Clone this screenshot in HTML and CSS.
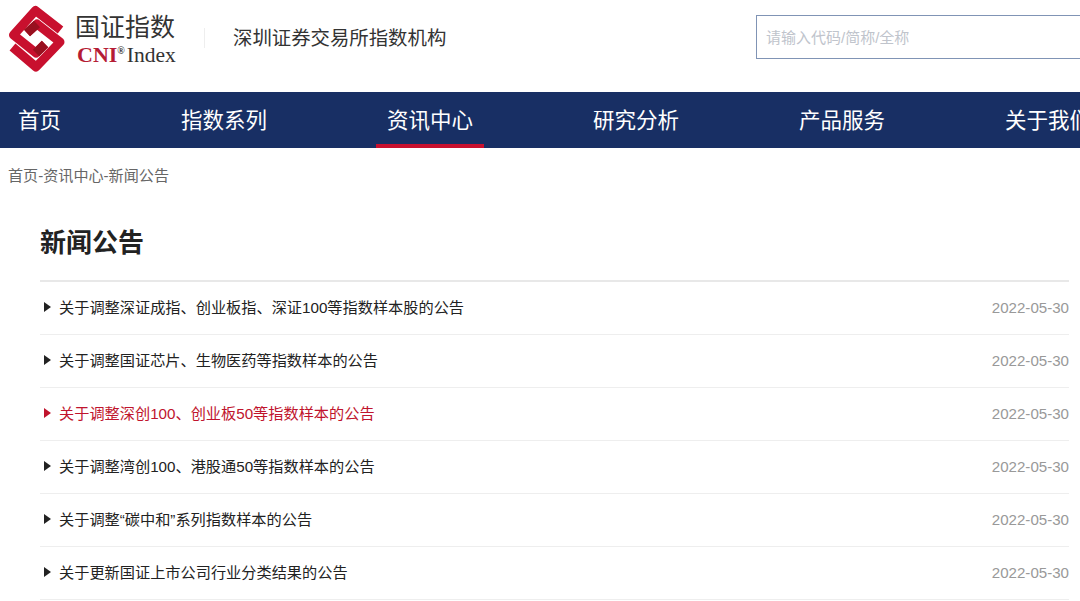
FILE: index.html
```html
<!DOCTYPE html>
<html lang="zh-CN">
<head>
<meta charset="utf-8">
<title>新闻公告</title>
<link rel="stylesheet" href="styles.css">
</head>
<body>
<header class="top">
  <div class="brand">
    <svg class="mark" width="58" height="68" viewBox="8 5 58 68">
      <path class="mark-band" d="M60.500 30 35.500 10.500 13.500 35 36 53 45 44"/>
      <path class="mark-band" d="M12.500 47 36 67 60 42 37 24 27 33"/>
      <path class="mark-shade" d="M37 24 27 33"/>
      <path class="mark-shade" d="M36 53 45 44"/>
    </svg>
    <div class="brand-text">
      <div class="brand-cn">国证指数</div>
      <div class="brand-en"><b>CNI</b><sup>®</sup><span class="brand-index">Index</span></div>
    </div>
  </div>
  <div class="sep"></div>
  <div class="org">深圳证券交易所指数机构</div>
  <div class="search"><span>请输入代码/简称/全称</span></div>
</header>
<nav class="nav">
  <a class="nav-item">首页</a>
  <a class="nav-item">指数系列</a>
  <a class="nav-item active">资讯中心</a>
  <a class="nav-item">研究分析</a>
  <a class="nav-item">产品服务</a>
  <a class="nav-item">关于我们</a>
</nav>
<div class="crumb">首页-资讯中心-新闻公告</div>
<main class="content">
  <h1 class="title">新闻公告</h1>
  <ul class="list">
    <li class="row"><span class="tri"></span><span class="txt">关于调整深证成指、创业板指、深证100等指数样本股的公告</span><span class="date">2022-05-30</span></li>
    <li class="row"><span class="tri"></span><span class="txt">关于调整国证芯片、生物医药等指数样本的公告</span><span class="date">2022-05-30</span></li>
    <li class="row hot"><span class="tri"></span><span class="txt">关于调整深创100、创业板50等指数样本的公告</span><span class="date">2022-05-30</span></li>
    <li class="row"><span class="tri"></span><span class="txt">关于调整湾创100、港股通50等指数样本的公告</span><span class="date">2022-05-30</span></li>
    <li class="row"><span class="tri"></span><span class="txt">关于调整“碳中和”系列指数样本的公告</span><span class="date">2022-05-30</span></li>
    <li class="row"><span class="tri"></span><span class="txt">关于更新国证上市公司行业分类结果的公告</span><span class="date">2022-05-30</span></li>
  </ul>
</main>
</body>
</html>
```
FILE: styles.css
```css
* { box-sizing: border-box; }
html, body { margin: 0; padding: 0; }
body {
  width: 1080px;
  height: 601px;
  overflow: hidden;
  background: #fff;
  color: #222;
  font-family: "Liberation Sans", "Noto Sans CJK SC", sans-serif;
}
.top {
  height: 92px;
  display: flex;
  align-items: flex-start;
}
.brand { display: flex; margin: 5px 0 0 8px; }
.mark-band { fill: none; stroke: #c8102e; stroke-width: 9; stroke-linejoin: round; }
.mark-shade { fill: none; stroke: #98101f; stroke-width: 9; }
.brand-text { margin: 6px 0 0 9px; width: 102px; }
.brand-cn { font-size: 25px; line-height: 33px; color: #333; white-space: nowrap; font-weight: 400; }
.brand-en { font-family: "Liberation Serif", serif; font-size: 22px; line-height: 21px; color: #333; white-space: nowrap; padding-left: 2px; }
.brand-en b { color: #b51c35; }
.brand-en sup { font-size: 10px; line-height: 0; font-weight: 700; }
.brand-index { margin-left: 2px; font-size: 21.5px; }
.sep { width: 1px; height: 20px; background: #eee; margin: 28px 0 0 27px; }
.org { font-size: 19.4px; line-height: 28px; margin: 24px 0 0 28px; color: #333; white-space: nowrap; width: 523px; }
.search {
  width: 324px;
  height: 44px;
  margin-top: 15px;
  border: 1px solid #8094b5;
  border-right: 0;
  padding-left: 9px;
  font-size: 15px;
  line-height: 43px;
  color: #c0c4cc;
  white-space: nowrap;
}
.nav {
  height: 56px;
  background: #182f64;
  display: flex;
  gap: 98px;
  padding-left: 7px;
  white-space: nowrap;
  overflow: hidden;
}
.nav-item {
  flex: none;
  padding: 0 11px;
  color: #fff;
  font-size: 21.5px;
  line-height: 58px;
}
.nav-item.active { box-shadow: inset 0 -4px 0 #c8102e; }
.crumb { font-size: 15.1px; line-height: 22px; color: #666; padding: 17px 0 0 8px; }
.content { padding: 0 11px 0 40px; }
.title { margin: 34px 0 0; font-size: 26px; line-height: 44px; font-weight: 700; color: #222; height: 59px; }
.list { list-style: none; margin: 0; padding: 0; border-top: 2px solid #e8e8e8; }
.row {
  height: 53px;
  display: flex;
  align-items: center;
  border-bottom: 1px solid #eee;
  font-size: 15.2px;
  color: #222;
}
.tri {
  width: 0;
  height: 0;
  margin: 0 8px 2px 4px;
  border-left: 7px solid #222;
  border-top: 5px solid transparent;
  border-bottom: 5px solid transparent;
}
.txt { flex: 1; margin-bottom: 4px; }
.date { color: #999; font-size: 15.1px; margin-bottom: 2px; }
.hot, .hot .txt { color: #c0142d; }
.hot .tri { border-left-color: #c0142d; }
```
